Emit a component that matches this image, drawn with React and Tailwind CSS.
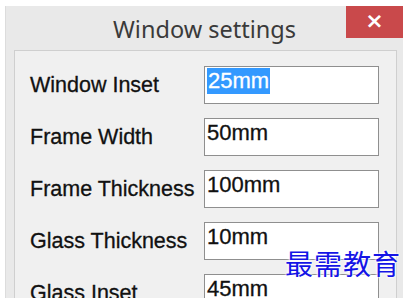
const rows = [
  { label: 'Window Inset', value: '25mm', selected: true },
  { label: 'Frame Width', value: '50mm' },
  { label: 'Frame Thickness', value: '100mm' },
  { label: 'Glass Thickness', value: '10mm' },
  { label: 'Glass Inset', value: '45mm' },
];

export default function App() {
  return (
    <div className="relative w-[407px] h-[298px] overflow-hidden bg-white pl-[5px] pt-[6px] pr-[4px]">
      <div className="h-full bg-[#e9e9e9] border-l border-[#dcdcdc] flex flex-col">
        <div className="grid grid-cols-[57px_1fr_57px] h-[44px] shrink-0">
          <div />
          <div className="flex items-center justify-center pt-[3px] text-[23.5px] text-[#3a3a3a] font-['Noto_Sans',sans-serif]">
            Window settings
          </div>
          <div className="h-[32px] bg-[#c9494b] flex items-center justify-center text-white text-[22px] font-bold font-['DejaVu_Sans',sans-serif] leading-none pb-[2px]">
            ×
          </div>
        </div>
        <div className="flex-1 min-h-0 ml-[8px] mr-[6px] bg-[#f0f0f0] border-t border-l border-r border-[#cfcfcf] pl-[15px] pt-[15px] flex flex-col gap-[14px] font-['Liberation_Sans',Arial,sans-serif] [-webkit-text-stroke:0.3px]">
          {rows.map((r) => (
            <div key={r.label} className="flex items-center h-[38px] shrink-0">
              <div className="w-[174px] shrink-0 text-[21.5px] text-[#111] whitespace-nowrap">{r.label}</div>
              <div className="w-[175px] h-[38px] bg-white border border-[#8f8f8f] pl-[2px] pt-[1px] text-[22px] text-[#111] leading-[26px]">
                {r.selected ? (
                  <span className="bg-[#3399ff] text-white inline-block px-[1px]">{r.value}</span>
                ) : (
                  r.value
                )}
              </div>
            </div>
          ))}
        </div>
      </div>
      <div
        className="absolute left-[285px] top-[249px] text-[28px] leading-none text-[#1414e6] font-['Noto_Sans_CJK_SC',sans-serif] tracking-[1px]"
        style={{ textShadow: '0 0 3px #fff, 0 0 3px #fff, 0 0 2px #fff' }}
      >
        最需教育
      </div>
    </div>
  );
}
